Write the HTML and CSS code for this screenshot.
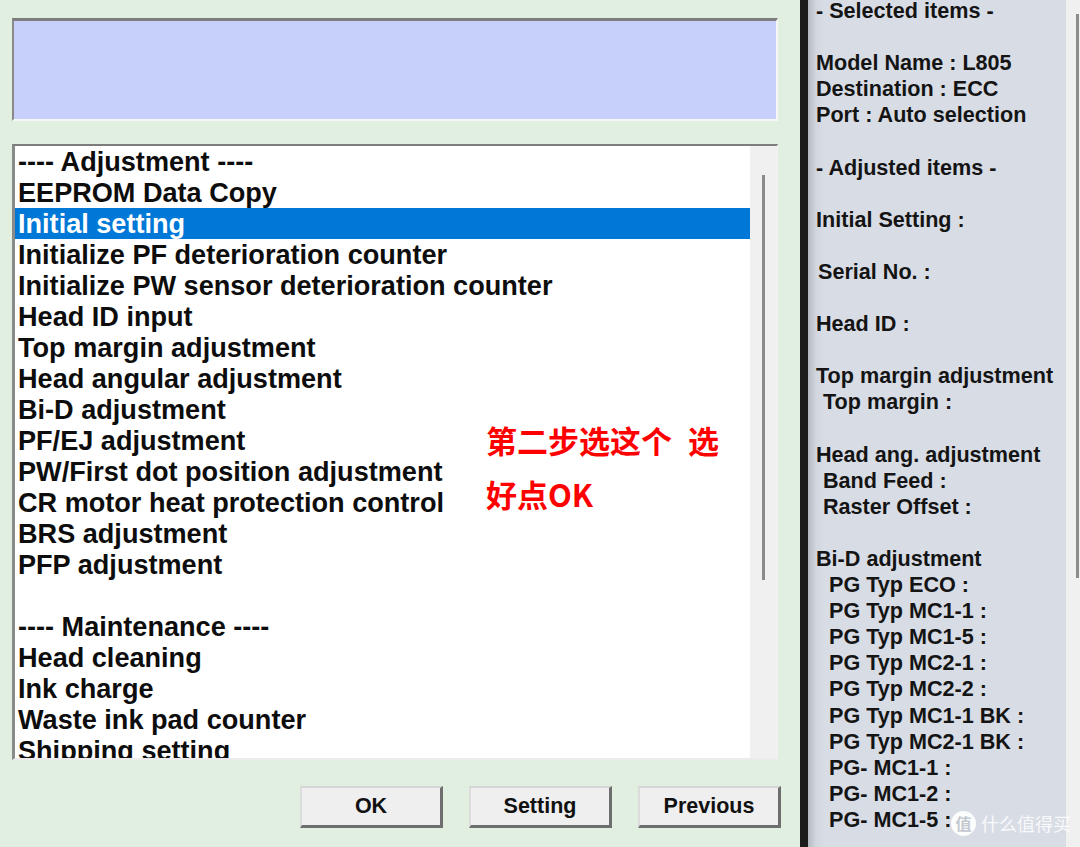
FILE: index.html
```html
<!DOCTYPE html>
<html lang="en">
<head>
<meta charset="utf-8">
<title>Adjustment Program</title>
<link rel="stylesheet" href="styles.css">
</head>
<body>
<div class="app">
  <section class="left">
    <div class="msgbox"></div>
    <div class="listbox">
      <ul class="list">
        <li>---- Adjustment ----</li>
        <li>EEPROM Data Copy</li>
        <li class="selected">Initial setting</li>
        <li>Initialize PF deterioration counter</li>
        <li>Initialize PW sensor deterioration counter</li>
        <li>Head ID input</li>
        <li>Top margin adjustment</li>
        <li>Head angular adjustment</li>
        <li>Bi-D adjustment</li>
        <li>PF/EJ adjustment</li>
        <li>PW/First dot position adjustment</li>
        <li>CR motor heat protection control</li>
        <li>BRS adjustment</li>
        <li>PFP adjustment</li>
        <li class="blank"></li>
        <li>---- Maintenance ----</li>
        <li>Head cleaning</li>
        <li>Ink charge</li>
        <li>Waste ink pad counter</li>
        <li>Shipping setting</li>
      </ul>
      <div class="scrollbar"><div class="thumb"></div></div>
    </div>
    <div class="buttons">
      <button class="btn">OK</button>
      <button class="btn">Setting</button>
      <button class="btn">Previous</button>
    </div>
  </section>
  <div class="divider"></div>
  <section class="info">
    <div class="info-lines">
      <div class="line">- Selected items -</div>
      <div class="line blank"></div>
      <div class="line">Model Name : L805</div>
      <div class="line">Destination : ECC</div>
      <div class="line">Port : Auto selection</div>
      <div class="line blank"></div>
      <div class="line">- Adjusted items -</div>
      <div class="line blank"></div>
      <div class="line">Initial Setting :</div>
      <div class="line blank"></div>
      <div class="line ind1">Serial No. :</div>
      <div class="line blank"></div>
      <div class="line">Head ID :</div>
      <div class="line blank"></div>
      <div class="line">Top margin adjustment</div>
      <div class="line ind2">Top margin :</div>
      <div class="line blank"></div>
      <div class="line">Head ang. adjustment</div>
      <div class="line ind2">Band Feed :</div>
      <div class="line ind2">Raster Offset :</div>
      <div class="line blank"></div>
      <div class="line">Bi-D adjustment</div>
      <div class="line ind3">PG Typ ECO :</div>
      <div class="line ind3">PG Typ MC1-1 :</div>
      <div class="line ind3">PG Typ MC1-5 :</div>
      <div class="line ind3">PG Typ MC2-1 :</div>
      <div class="line ind3">PG Typ MC2-2 :</div>
      <div class="line ind3">PG Typ MC1-1 BK :</div>
      <div class="line ind3">PG Typ MC2-1 BK :</div>
      <div class="line ind3">PG- MC1-1 :</div>
      <div class="line ind3">PG- MC1-2 :</div>
      <div class="line ind3">PG- MC1-5 :</div>
    </div>
  </section>
  <div class="edge"><div class="edge-line"></div></div>

  <div class="note">第二步选这个<span class="note-gap">选</span><br>好点OK</div>
  <div class="watermark"><span class="wm-badge">值</span><span class="wm-text">什么值得买</span></div>
</div>
</body>
</html>
```

FILE: styles.css
```css
html, body {
  margin: 0;
  padding: 0;
}
body {
  width: 1080px;
  height: 847px;
  overflow: hidden;
  font-family: "Liberation Sans", Arial, sans-serif;
  color: #111;
}
.app {
  position: relative;
  display: flex;
  width: 1080px;
  height: 847px;
}
.left {
  width: 800px;
  flex: none;
  background: #e1efe1;
  padding: 18px 0 0 12px;
  box-sizing: border-box;
  display: flex;
  flex-direction: column;
}
.msgbox {
  width: 766px;
  height: 103px;
  box-sizing: border-box;
  background: #c7d0fb;
  border-top: 3px solid #7d7d7d;
  border-left: 2px solid #8a8a8a;
  border-right: 2px solid #f6f6f6;
  border-bottom: 2px solid #f6f6f6;
}
.listbox {
  margin-top: 23px;
  width: 766px;
  height: 616px;
  box-sizing: border-box;
  background: #fff;
  border-top: 2px solid #7d7d7d;
  border-left: 3px solid #8a8a8a;
  border-right: 1px solid #f4f4f4;
  border-bottom: 2px solid #ececec;
  display: flex;
  overflow: hidden;
}
.list {
  list-style: none;
  margin: 0;
  padding: 0;
  flex: 1;
  font-weight: bold;
  font-size: 27.1px;
  overflow: hidden;
}
.list li {
  height: 31px;
  line-height: 32px;
  padding-left: 3px;
  white-space: nowrap;
  color: #0d0d0d;
}
.list li.selected {
  background: #0078d7;
  color: #fff;
}
.scrollbar {
  width: 27px;
  flex: none;
  background: #f0f0f0;
  position: relative;
}
.thumb {
  margin: 29px 0 0 12px;
  width: 3px;
  height: 405px;
  background: #8a8a8a;
}
.buttons {
  margin-top: 26px;
  display: flex;
  justify-content: flex-end;
  gap: 26px;
  padding-right: 19px;
}
.btn {
  width: 143px;
  height: 42px;
  box-sizing: border-box;
  background: #efefef;
  border-top: 2px solid #d6d6d6;
  border-left: 2px solid #dcdcdc;
  border-right: 3px solid #6e6e6e;
  border-bottom: 3px solid #6e6e6e;
  font-family: "Liberation Sans", Arial, sans-serif;
  font-weight: bold;
  font-size: 21.5px;
  color: #111;
  padding: 0;
}
.divider {
  width: 8px;
  flex: none;
  background: #1c1c1c;
}
.info {
  width: 258px;
  flex: none;
  background: linear-gradient(to right, #b4b8c0 0, #d2d6df 8px, #d8dce5 16px, #d8dce5 100%);
  padding-left: 8px;
  box-sizing: border-box;
  overflow: hidden;
}
.info-lines {
  margin-top: -2px;
  font-weight: bold;
  font-size: 21.6px;
}
.line {
  height: 26.1px;
  line-height: 26.1px;
  white-space: nowrap;
  color: #141414;
}
.ind1 { padding-left: 2px; }
.ind2 { padding-left: 7px; }
.ind3 { padding-left: 13px; }
.edge {
  flex: 1;
  background: #f0f0f0;
  padding: 14px 0 0 10px;
  box-sizing: border-box;
}
.edge-line {
  width: 3px;
  height: 564px;
  background: #8c8c8c;
}
.note {
  position: absolute;
  left: 486px;
  top: 413px;
  font-family: "Noto Sans CJK SC", "Liberation Sans", sans-serif;
  font-weight: bold;
  font-size: 31px;
  line-height: 54px;
  color: #ff0000;
}
.note-gap {
  margin-left: 16px;
}
.watermark {
  position: absolute;
  left: 951px;
  top: 810px;
  display: flex;
  align-items: center;
  gap: 5px;
}
.wm-badge {
  width: 25px;
  height: 25px;
  border-radius: 50%;
  background: rgba(255, 255, 255, 0.92);
  color: #c4c8d0;
  font-family: "Noto Sans CJK SC", sans-serif;
  font-size: 16px;
  font-weight: bold;
  line-height: 25px;
  text-align: center;
}
.wm-text {
  font-family: "Noto Sans CJK SC", sans-serif;
  font-size: 18px;
  color: rgba(255, 255, 255, 0.85);
}
```
